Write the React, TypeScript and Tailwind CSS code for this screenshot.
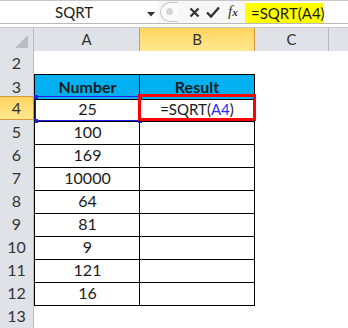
import React from 'react';

type Row = { n: number; a?: string; b?: React.ReactNode; head?: boolean; table?: boolean; sel?: boolean };

const rows: Row[] = [
  { n: 2 },
  { n: 3, a: 'Number', b: 'Result', head: true, table: true },
  { n: 4, a: '25', table: true, sel: true },
  { n: 5, a: '100', table: true },
  { n: 6, a: '169', table: true },
  { n: 7, a: '10000', table: true },
  { n: 8, a: '64', table: true },
  { n: 9, a: '81', table: true },
  { n: 10, a: '9', table: true },
  { n: 11, a: '121', table: true },
  { n: 12, a: '16', table: true },
  { n: 13 },
];

const font = { fontFamily: 'Lato, "Open Sans", Arial, sans-serif' };

const App: React.FC = () => {
  return (
    <div className="w-[348px] h-[328px] overflow-hidden bg-white text-[#1a1a1a]" style={font}>
      {/* Formula bar */}
      <div className="h-[24px] flex items-stretch border-t border-[#c8c8c8] border-b border-b-[#b9b9b9]">
        <div className="w-[158px] relative flex items-center bg-white">
          <span className="ml-[55px] text-[15px] leading-none">SQRT</span>
          <svg className="absolute left-[147px] top-[11px]" width="8" height="5" viewBox="0 0 8 5">
            <path d="M0 0 H8 L4 4.5 Z" fill="#333" />
          </svg>
        </div>
        <div className="w-[87px] relative flex items-center bg-[#f7f7f7]">
          {/* disabled expander knob */}
          <div className="absolute left-[2px] top-[1px] w-[18px] h-[20px] rounded-l-full border border-r-0 border-[#c4c4c4] bg-[#fbfbfb]" />
          <div className="absolute left-[8px] top-[7px] w-[7px] h-[7px] rounded-full bg-[#d6d6d6]" />
          <svg className="absolute left-[31px] top-[6px]" width="11" height="11" viewBox="0 0 11 11">
            <path d="M1.5 1.5 L9.5 9.5 M9.5 1.5 L1.5 9.5" stroke="#333" strokeWidth="2.2" />
          </svg>
          <svg className="absolute left-[48px] top-[5px]" width="14" height="12" viewBox="0 0 14 12">
            <path d="M1 6.5 L5 10.5 L13 1.5" stroke="#333" strokeWidth="2.4" fill="none" />
          </svg>
          <span
            className="absolute left-[70px] top-[3px] text-[15px] italic leading-none text-[#333]"
            style={{ fontFamily: '"Liberation Serif", "DejaVu Serif", serif' }}
          >
            f<span className="text-[11px] font-bold">x</span>
          </span>
        </div>
        <div className="flex-1 flex items-start bg-white">
          <div className="mt-[2px] w-[78px] h-[20px] bg-[#ffff00] flex items-center pl-[6px] text-[15px] leading-none">
            =SQRT(A4)
          </div>
        </div>
      </div>
      <div className="h-[4px] bg-white border-b border-[#c9c9c9]" />

      {/* Column headers */}
      <div className="grid grid-cols-[34px_106px_115px_74px_1fr] h-[23px] text-[15px] text-[#333] border-b border-[#9ea2a6]">
        <div className="relative bg-[#dfe2e6] border-r border-[#b5b9be]">
          <svg className="absolute right-[5px] bottom-[3px]" width="13" height="13" viewBox="0 0 13 13">
            <path d="M13 0 V13 H0 Z" fill="#b9bdc2" />
          </svg>
        </div>
        <div className="bg-[#dfe2e6] border-r border-[#b5b9be] flex items-center justify-center">A</div>
        <div className="bg-gradient-to-b from-[#ffd45c] to-[#ffe88f] border-x border-[#d9993a] -ml-px flex items-center justify-center">B</div>
        <div className="bg-[#dfe2e6] border-r border-[#b5b9be] flex items-center justify-center">C</div>
        <div className="bg-[#dfe2e6]" />
      </div>

      {/* Rows */}
      {rows.map((r) => (
        <div key={r.n} className="grid grid-cols-[34px_106px_115px_1fr] h-[23px] text-[16px]">
          <div
            className={
              r.sel
                ? 'bg-gradient-to-b from-[#ffd45c] to-[#ffe88f] border-y border-r border-[#d9993a] -mt-px h-[24px] flex items-center justify-center text-[#333]'
                : 'bg-[#dfe2e6] border-r border-b border-[#b9bdc2] flex items-center justify-center text-[#333]'
            }
          >
            {r.n}
          </div>
          {r.table ? (
            <>
              <div
                className={`relative border-l border-b border-black flex items-center justify-center ${
                  r.head ? 'bg-[#00b0f0] border-t font-bold' : ''
                }`}
              >
                {r.a}
                {r.sel && (
                  <>
                    <div className="absolute inset-0 -top-px border border-[#1c1cf0]" />
                    <div className="absolute -left-[1px] -top-[2px] w-[4px] h-[4px] bg-[#1c1cf0]" />
                    <div className="absolute -left-[1px] -bottom-[2px] w-[4px] h-[4px] bg-[#1c1cf0]" />
                    <div className="absolute -right-[2px] -top-[2px] w-[4px] h-[4px] bg-[#1c1cf0]" />
                    <div className="absolute -right-[2px] -bottom-[2px] w-[4px] h-[4px] bg-[#1c1cf0]" />
                  </>
                )}
              </div>
              <div
                className={`relative border-x border-b border-black flex items-center justify-center -ml-px ${
                  r.head ? 'bg-[#00b0f0] border-t font-bold' : ''
                }`}
              >
                {r.head && r.b}
                {r.sel && (
                  <>
                    <span className="text-[15px]">
                      =SQRT(<span className="text-[#2b2bff]">A4</span>)
                    </span>
                    <div className="absolute -left-[2px] -top-[3px] w-[118px] h-[27px] border-[3px] border-[#ff0000]" />
                  </>
                )}
              </div>
            </>
          ) : (
            <>
              <div />
              <div />
            </>
          )}
          <div />
        </div>
      ))}
    </div>
  );
};

export default App;
